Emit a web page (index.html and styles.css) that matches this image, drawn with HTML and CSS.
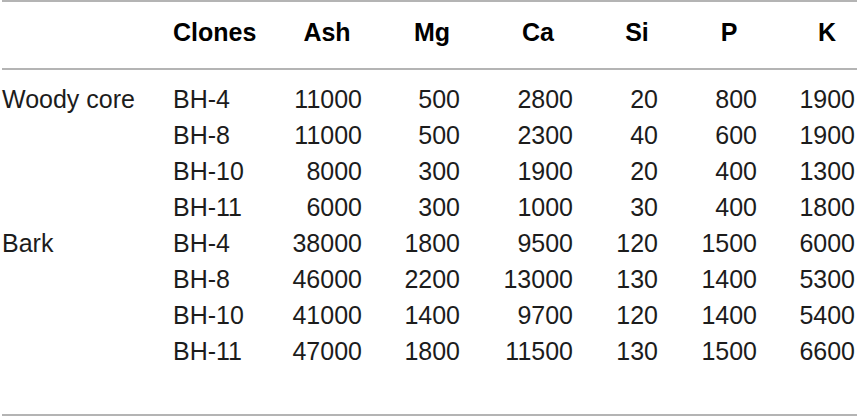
FILE: index.html
```
<!DOCTYPE html>
<html>
<head>
<meta charset="utf-8">
<link rel="stylesheet" href="styles.css">
</head>
<body>
<div class="sheet">
  <div class="row head">
    <div class="cell"></div>
    <div class="cell">Clones</div>
    <div class="cell num c3">Ash</div>
    <div class="cell num c4">Mg</div>
    <div class="cell num c5">Ca</div>
    <div class="cell num c6">Si</div>
    <div class="cell num c7">P</div>
    <div class="cell num c8">K</div>
  </div>
  <div class="body">
    <div class="row">
      <div class="cell">Woody core</div><div class="cell">BH-4</div>
      <div class="cell num c3">11000</div><div class="cell num c4">500</div><div class="cell num c5">2800</div><div class="cell num c6">20</div><div class="cell num c7">800</div><div class="cell num c8">1900</div>
    </div>
    <div class="row">
      <div class="cell"></div><div class="cell">BH-8</div>
      <div class="cell num c3">11000</div><div class="cell num c4">500</div><div class="cell num c5">2300</div><div class="cell num c6">40</div><div class="cell num c7">600</div><div class="cell num c8">1900</div>
    </div>
    <div class="row">
      <div class="cell"></div><div class="cell">BH-10</div>
      <div class="cell num c3">8000</div><div class="cell num c4">300</div><div class="cell num c5">1900</div><div class="cell num c6">20</div><div class="cell num c7">400</div><div class="cell num c8">1300</div>
    </div>
    <div class="row">
      <div class="cell"></div><div class="cell">BH-11</div>
      <div class="cell num c3">6000</div><div class="cell num c4">300</div><div class="cell num c5">1000</div><div class="cell num c6">30</div><div class="cell num c7">400</div><div class="cell num c8">1800</div>
    </div>
    <div class="row">
      <div class="cell">Bark</div><div class="cell">BH-4</div>
      <div class="cell num c3">38000</div><div class="cell num c4">1800</div><div class="cell num c5">9500</div><div class="cell num c6">120</div><div class="cell num c7">1500</div><div class="cell num c8">6000</div>
    </div>
    <div class="row">
      <div class="cell"></div><div class="cell">BH-8</div>
      <div class="cell num c3">46000</div><div class="cell num c4">2200</div><div class="cell num c5">13000</div><div class="cell num c6">130</div><div class="cell num c7">1400</div><div class="cell num c8">5300</div>
    </div>
    <div class="row">
      <div class="cell"></div><div class="cell">BH-10</div>
      <div class="cell num c3">41000</div><div class="cell num c4">1400</div><div class="cell num c5">9700</div><div class="cell num c6">120</div><div class="cell num c7">1400</div><div class="cell num c8">5400</div>
    </div>
    <div class="row">
      <div class="cell"></div><div class="cell">BH-11</div>
      <div class="cell num c3">47000</div><div class="cell num c4">1800</div><div class="cell num c5">11500</div><div class="cell num c6">130</div><div class="cell num c7">1500</div><div class="cell num c8">6600</div>
    </div>
  </div>
</div>
</body>
</html>
```
FILE: styles.css
```
html, body {
  margin: 0;
  padding: 0;
  background: #ffffff;
}
body {
  font-family: "Liberation Sans", Arial, sans-serif;
  font-size: 25px;
  line-height: 36px;
  color: #1c1c1c;
}
.sheet {
  margin: 0 1px 0 2px;
  border-top: 2px solid #b4b4b4;
  border-bottom: 2px solid #b4b4b4;
}
.row {
  display: grid;
  grid-template-columns: 171px 83px 106px 98px 113px 85px 99px 98px;
}
.head {
  font-weight: bold;
  color: #000;
  padding: 12px 0 18px;
  border-bottom: 2px solid #b4b4b4;
}
.body {
  padding: 11px 0 45px;
}
.cell {
  white-space: nowrap;
}
.num {
  text-align: right;
}
.head .num {
  text-align: center;
}
.c3 { padding-left: 36px; }
.c4 { padding-left: 42px; }
.c5 { padding-left: 43px; }
.c6 { padding-left: 43px; }
.c7 { padding-left: 43px; }
.c8 { padding-left: 42px; }
```
